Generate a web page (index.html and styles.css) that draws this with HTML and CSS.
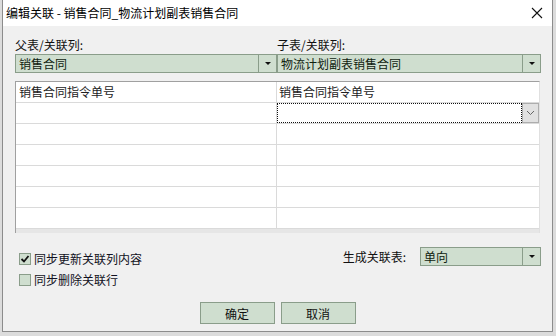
FILE: index.html
```html
<!DOCTYPE html>
<html lang="zh-CN">
<head>
  <meta charset="UTF-8">
  <title>编辑关联</title>
  <link rel="stylesheet" href="styles.css">
</head>
<body>
  <!-- Dialog -->
  <div class="dialog">
    <div class="title-bar">
      <span class="title">编辑关联 - 销售合同_物流计划副表销售合同</span>
      <svg class="close" width="12" height="12" viewBox="0 0 12 12">
        <path d="M1 1 L11 11 M11 1 L1 11" stroke="#111" stroke-width="1.1" fill="none"/>
      </svg>
    </div>

    <div class="content">
      <!-- Parent / child columns -->
      <div class="pickers">
        <div class="picker">
          <label class="field-label">父表/关联列:</label>
          <div class="combo">
            <span class="combo-text">销售合同</span>
            <span class="combo-btn"><i class="arrow"></i></span>
          </div>
        </div>
        <div class="picker">
          <label class="field-label">子表/关联列:</label>
          <div class="combo">
            <span class="combo-text">物流计划副表销售合同</span>
            <span class="combo-btn"><i class="arrow"></i></span>
          </div>
        </div>
      </div>

      <!-- Mapping grid -->
      <div class="grid">
        <div class="row">
          <div class="cell">销售合同指令单号</div>
          <div class="cell">销售合同指令单号</div>
        </div>
        <div class="row">
          <div class="cell"></div>
          <div class="cell edit-cell">
            <span class="focus"></span>
            <span class="cell-btn">
              <svg width="9" height="6" viewBox="0 0 9 6"><path d="M1 1 L4.5 4.5 L8 1" stroke="#666" fill="none"/></svg>
            </span>
          </div>
        </div>
        <div class="row"><div class="cell"></div><div class="cell"></div></div>
        <div class="row"><div class="cell"></div><div class="cell"></div></div>
        <div class="row"><div class="cell"></div><div class="cell"></div></div>
        <div class="row"><div class="cell"></div><div class="cell"></div></div>
        <div class="row"><div class="cell"></div><div class="cell"></div></div>
        <div class="grid-foot"></div>
      </div>

      <!-- Options -->
      <div class="options">
        <div class="checks">
          <div class="check">
            <span class="box">
              <svg width="10" height="10" viewBox="0 0 10 10"><path d="M1.5 5 L4 7.5 L8.5 2" stroke="#111" stroke-width="1.8" fill="none"/></svg>
            </span>
            <span>同步更新关联列内容</span>
          </div>
          <div class="check">
            <span class="box"></span>
            <span>同步删除关联行</span>
          </div>
        </div>
        <div class="gen">
          <span class="field-label">生成关联表:</span>
          <div class="combo small">
            <span class="combo-text">单向</span>
            <span class="combo-btn"><i class="arrow"></i></span>
          </div>
        </div>
      </div>

      <!-- Buttons -->
      <div class="buttons">
        <button class="btn">确定</button>
        <button class="btn">取消</button>
      </div>
    </div>
  </div>
</body>
</html>
```

FILE: styles.css
```css
/* General */
body {
  margin: 0;
  width: 556px;
  height: 336px;
  overflow: hidden;
  background: #dcdcdc;
  font-family: "Noto Sans CJK SC", "Microsoft YaHei", sans-serif;
  font-size: 12px;
  color: #000;
}

.dialog {
  margin-left: 2px;
  width: 549px;
  height: 331px;
  background: #f0f0f0;
  border: 1px solid #8c8c8c;
  border-top: none;
  display: flex;
  flex-direction: column;
}

/* Title bar */
.title-bar {
  height: 26px;
  background: #fff;
  display: flex;
  align-items: center;
  justify-content: space-between;
  padding: 0 9px 0 3px;
}

.title {
  line-height: 14px;
  color: #000;
}

.close {
  display: block;
}

/* Content */
.content {
  padding: 12px 11px 0 12px;
}

.pickers {
  display: flex;
}

.picker {
  display: flex;
  flex-direction: column;
  width: 262px;
}

.picker + .picker {
  width: 264px;
}

.field-label {
  line-height: 14px;
  height: 14px;
  margin-bottom: 2px;
  color: #111;
}

/* Combo boxes */
.combo {
  height: 17px;
  border: 1px solid #8a9d8a;
  background: #cfdecf;
  display: flex;
}

.combo-text {
  flex: 1;
  padding-left: 3px;
  line-height: 17px;
  color: #10220f;
}

.combo-btn {
  width: 17px;
  border-left: 1px solid #8a9d8a;
  display: flex;
  align-items: center;
  justify-content: center;
}

.arrow {
  width: 0;
  height: 0;
  border-left: 3px solid transparent;
  border-right: 3px solid transparent;
  border-top: 3px solid #111;
}

/* Grid */
.grid {
  margin-top: 8px;
  width: 523px;
  border: 1px solid #a0a0a0;
  border-right-color: #e0e0e0;
  border-bottom: none;
  background: #fff;
}

.row {
  display: flex;
  height: 20px;
  border-bottom: 1px solid #dadada;
}

.cell {
  width: 257px;
  padding-left: 3px;
  line-height: 20px;
  color: #222;
}

.cell + .cell {
  width: 260px;
  padding-left: 2px;
  border-left: 1px solid #dadada;
}

.edit-cell {
  display: flex;
  padding-left: 0 !important;
  width: 262px !important;
}

.focus {
  flex: 1;
  border: 1px dotted #111;
}

.cell-btn {
  width: 15px;
  height: 18px;
  background: #e1e1e1;
  border: 1px solid #adadad;
  display: flex;
  align-items: center;
  justify-content: center;
}

.grid-foot {
  height: 4px;
  background: #e6e6e6;
}

/* Options */
.options {
  display: flex;
  justify-content: space-between;
}

.checks {
  display: flex;
  flex-direction: column;
  gap: 9px;
  margin-top: 20px;
  padding-left: 4px;
}

.check {
  display: flex;
  align-items: center;
  gap: 3px;
  height: 12px;
  line-height: 14px;
  color: #112;
}

.box {
  width: 10px;
  height: 10px;
  border: 1px solid #8a9d8a;
  background: #cfdecf;
  display: flex;
  align-items: center;
  justify-content: center;
}

.gen {
  display: flex;
  align-items: center;
  margin-top: 14px;
  height: 19px;
}

.gen .field-label {
  margin: 0 14px 0 0;
}

.combo.small {
  width: 119px;
}

/* Buttons */
.buttons {
  display: flex;
  justify-content: center;
  gap: 6px;
  margin-top: 16px;
  padding-right: 1px;
}

.btn {
  width: 75px;
  height: 22px;
  border: 1px solid #8a9d8a;
  background: #cfdecf;
  font-family: inherit;
  font-size: 12px;
  color: #111;
  padding: 0;
}
```
